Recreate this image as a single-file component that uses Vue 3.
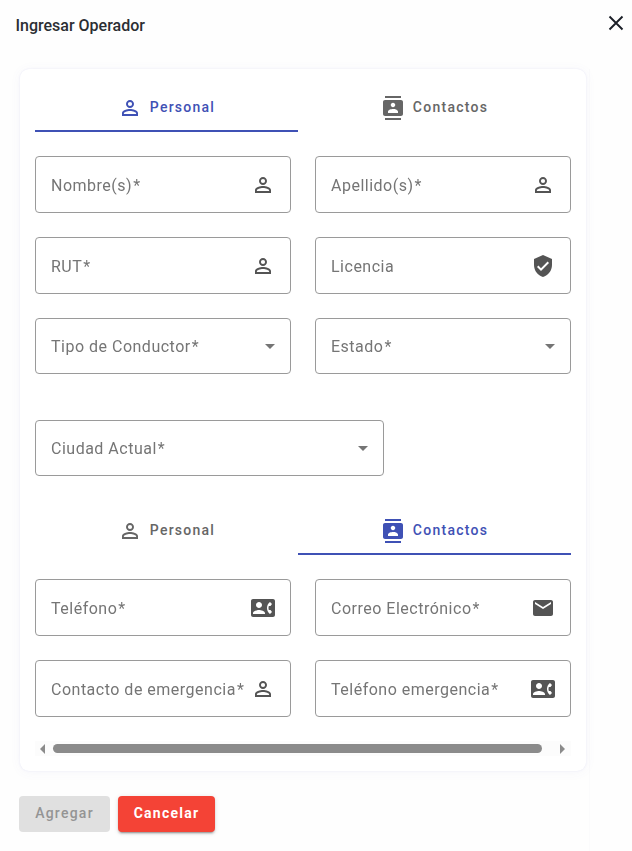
<script setup>
import { ref } from 'vue'

const icons = {
  person: 'M12 5.9a2.1 2.1 0 1 1 0 4.2 2.1 2.1 0 0 1 0-4.2m0 9c2.97 0 6.1 1.46 6.1 2.1v1.1H5.9V17c0-.64 3.13-2.1 6.1-2.1M12 4C9.79 4 8 5.79 8 8s1.79 4 4 4 4-1.79 4-4-1.79-4-4-4zm0 9c-2.67 0-8 1.34-8 4v3h16v-3c0-2.66-5.33-4-8-4z',
  contacts: 'M20 0H4v2h16V0zM4 24h16v-2H4v2zM20 4H4c-1.1 0-2 .9-2 2v12c0 1.1.9 2 2 2h16c1.1 0 2-.9 2-2V6c0-1.1-.9-2-2-2zm-8 2.75c1.24 0 2.25 1.01 2.25 2.25s-1.01 2.25-2.25 2.25S9.75 10.24 9.75 9 10.76 6.75 12 6.75zM17 17H7v-1.5c0-1.67 3.33-2.5 5-2.5s5 .83 5 2.5V17z',
  verified: 'M12 1L3 5v6c0 5.55 3.84 10.74 9 12 5.16-1.26 9-6.45 9-12V5l-9-4zm-2 16l-4-4 1.41-1.41L10 14.17l6.59-6.59L18 9l-8 8z',
  phone: 'M22 3H2C.9 3 0 3.9 0 5v14c0 1.1.9 2 2 2h20c1.1 0 1.99-.9 1.99-2L24 5c0-1.1-.9-2-2-2zM8 6c1.66 0 3 1.34 3 3s-1.34 3-3 3-3-1.34-3-3 1.34-3 3-3zm6 12H2v-1c0-2 4-3.1 6-3.1s6 1.1 6 3.1v1zm3.85-4h1.64L21 16l-1.99 1.99c-1.31-.98-2.28-2.38-2.73-3.99-.18-.64-.28-1.31-.28-2s.1-1.36.28-2c.45-1.62 1.42-3.01 2.73-3.99L21 8l-1.51 2h-1.64c-.22.63-.35 1.3-.35 2s.13 1.37.35 2z',
  email: 'M20 4H4c-1.1 0-1.99.9-1.99 2L2 18c0 1.1.9 2 2 2h16c1.1 0 2-.9 2-2V6c0-1.1-.9-2-2-2zm0 4l-8 5-8-5V6l8 5 8-5v2z'
}

const tabs = [
  { id: 'personal', label: 'Personal', icon: 'person' },
  { id: 'contactos', label: 'Contactos', icon: 'contacts' }
]

const sections = ref([
  {
    active: 'personal',
    fields: [
      { label: 'Nombre(s)', required: true, icon: 'person' },
      { label: 'Apellido(s)', required: true, icon: 'person' },
      { label: 'RUT', required: true, icon: 'person' },
      { label: 'Licencia', icon: 'verified' },
      { label: 'Tipo de Conductor', required: true, select: true },
      { label: 'Estado', required: true, select: true },
      { label: 'Ciudad Actual', required: true, select: true, wide: true }
    ]
  },
  {
    active: 'contactos',
    fields: [
      { label: 'Teléfono', required: true, icon: 'phone' },
      { label: 'Correo Electrónico', required: true, icon: 'email' },
      { label: 'Contacto de emergencia', required: true, icon: 'person' },
      { label: 'Teléfono emergencia', required: true, icon: 'phone' }
    ]
  }
])
</script>

<template>
  <div class="dialog">
    <header class="header">
      <h3 class="title">Ingresar Operador</h3>
      <button class="close" aria-label="Cerrar">
        <svg viewBox="0 0 16 16"><path d="M1.5 1.5l13 13M14.5 1.5l-13 13" /></svg>
      </button>
    </header>

    <div class="body">
      <div class="card">
        <section v-for="section in sections" :key="section.active" class="section">
          <nav class="tabs">
            <button
              v-for="tab in tabs"
              :key="tab.id"
              class="tab"
              :class="{ active: section.active === tab.id }">
              <svg class="icon" viewBox="0 0 24 24"><path :d="icons[tab.icon]" /></svg>
              <span>{{ tab.label }}</span>
            </button>
          </nav>
          <div class="fields">
            <div
              v-for="field in section.fields"
              :key="field.label"
              class="field"
              :class="{ select: field.select, wide: field.wide }">
              <span class="label">{{ field.label }}<span v-if="field.required" class="required">*</span></span>
              <svg v-if="field.select" class="arrow" viewBox="0 0 10 5"><path d="M0 0h10L5 5z" /></svg>
              <svg v-else class="icon" viewBox="0 0 24 24"><path :d="icons[field.icon]" /></svg>
            </div>
          </div>
        </section>

        <div class="scrollbar">
          <svg class="scroll-arrow" viewBox="0 0 5 10"><path d="M5 0v10L0 5z" /></svg>
          <div class="thumb"></div>
          <svg class="scroll-arrow" viewBox="0 0 5 10"><path d="M0 0v10l5-5z" /></svg>
        </div>
      </div>

      <footer class="actions">
        <button class="btn" disabled>Agregar</button>
        <button class="btn warn">Cancelar</button>
      </footer>
    </div>
  </div>
</template>

<style>
body {
  background: #fefefe;
  overflow: hidden;
}
</style>

<style scoped>
.dialog {
  box-sizing: border-box;
  height: 851px;
  font-family: Roboto, "Liberation Sans", sans-serif;
  background: #fefefe;
}

.dialog * {
  box-sizing: border-box;
}

button {
  border: 0;
  padding: 0;
  background: none;
  font-family: inherit;
}

.header {
  display: flex;
  justify-content: space-between;
  height: 69px;
  padding: 15px 8px 0 15.5px;
}

.title {
  margin: 0;
  font-size: 16px;
  font-weight: 500;
  line-height: 21px;
  color: #2b2e33;
}

.close {
  width: 16px;
  height: 16px;
}

.close svg {
  display: block;
  width: 16px;
  height: 16px;
  fill: none;
  stroke: #1b1f27;
  stroke-width: 1.9;
}

.body {
  width: 590px;
  height: 782px;
  padding-left: 20px;
  border-right: 1px solid #fbfbfc;
}

.card {
  width: 566px;
  height: 702px;
  padding: 15px;
  border-radius: 9px;
  background: #fff;
  box-shadow: 0 0 2px rgba(90, 90, 200, .13), 0 1px 12px rgba(90, 90, 170, .05);
}

.section + .section {
  margin-top: 31px;
}

.tabs {
  display: grid;
  grid-template-columns: 263px 273px;
}

.tab {
  display: flex;
  align-items: center;
  justify-content: center;
  gap: 8px;
  height: 48px;
  color: #666;
  font-size: 14px;
  font-weight: 500;
  letter-spacing: 1.25px;
}

.tab span {
  margin-top: -2px;
}

.tab.active {
  color: #3f51b5;
  box-shadow: inset 0 -2px #3f51b5;
}

.icon {
  flex: none;
  width: 24px;
  height: 24px;
  fill: currentColor;
}

.fields {
  display: grid;
  grid-template-columns: 256px 256px;
  gap: 24px;
  margin-top: 24px;
}

.field {
  display: flex;
  align-items: center;
  justify-content: space-between;
  height: 57px;
  padding: 0 15px;
  border: 1px solid #9a9a9a;
  border-radius: 4px;
  color: #545454;
}

.select {
  height: 56px;
}

.wide {
  grid-column: 1 / -1;
  width: 349px;
  margin-top: 22px;
}

.label {
  color: #757575;
  font-size: 16px;
  letter-spacing: .5px;
  line-height: 24px;
  white-space: nowrap;
  transform: translateY(.5px);
  will-change: transform;
}

.select .label {
  transform: translateY(1px);
}

.required {
  margin-left: 1px;
}

.arrow {
  width: 10px;
  height: 5px;
  fill: #757575;
}

.scrollbar {
  display: flex;
  align-items: center;
  justify-content: space-between;
  height: 15px;
  margin-top: 24px;
  padding: 0 6px 0 5px;
  background: #fcfcfc;
}

.scroll-arrow {
  width: 5px;
  height: 10px;
  fill: #8b8b8b;
}

.thumb {
  width: 489px;
  height: 9px;
  margin-right: 10px;
  border-radius: 5px;
  background: #8b8b8b;
}

.actions {
  display: flex;
  gap: 8px;
  margin: 25px 0 0 -1px;
}

.btn {
  width: 97px;
  height: 36px;
  padding-bottom: 2px;
  border-radius: 4px;
  font-size: 14px;
  font-weight: 700;
  letter-spacing: 1.25px;
}

.btn:disabled {
  width: 91px;
  color: #949494;
  background: #e0e0e0;
  font-weight: 500;
}

.warn {
  color: #fff;
  background: #f44336;
  box-shadow: 0 3px 1px -2px rgba(0, 0, 0, .2), 0 2px 2px rgba(0, 0, 0, .14), 0 1px 5px rgba(0, 0, 0, .12);
}
</style>
